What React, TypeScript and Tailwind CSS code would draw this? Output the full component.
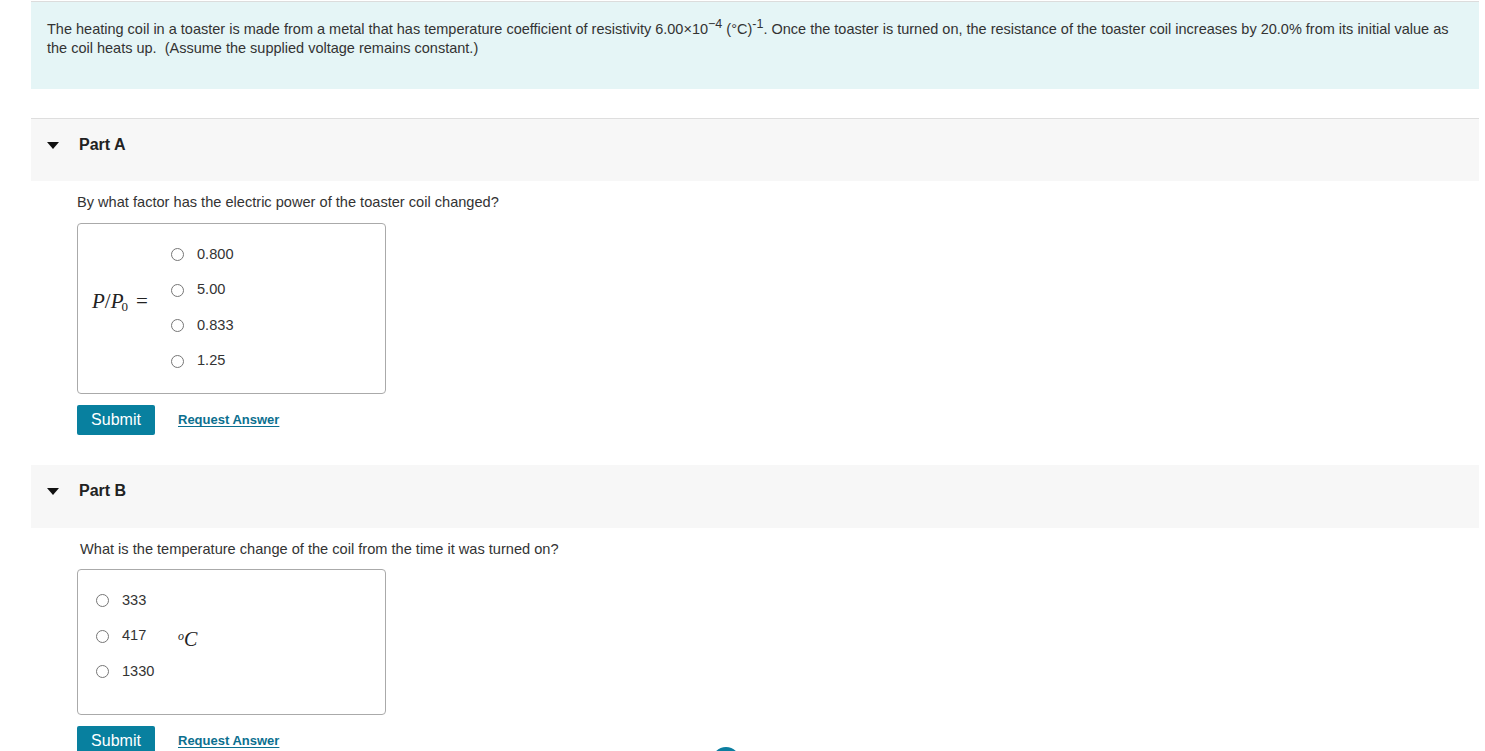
import React from "react";

const Radio = ({ label }: { label: string }) => (
  <div className="flex items-center h-[35.5px]">
    <span className="w-[13px] h-[13px] rounded-full border border-[#767676] bg-white shrink-0" />
    <span className="ml-[13px] text-[14.6px] text-[#333]">{label}</span>
  </div>
);

const Caret = () => (
  <svg width="12" height="7" viewBox="0 0 12 7" className="shrink-0 mt-[6px]">
    <path d="M0 0 L12 0 L6 7 Z" fill="#111" />
  </svg>
);

const PartHeader = ({ title, border }: { title: string; border?: boolean }) => (
  <div className={`flex items-start h-[63px] bg-[#f7f7f7] pl-[16px] pt-[17px] ${border ? "border-t border-[#dedede]" : ""}`}>
    <Caret />
    <span className="ml-[20px] text-[16px] leading-[18px] font-bold text-[#222]">{title}</span>
  </div>
);

const Actions = () => (
  <div className="flex items-center ml-[46px]">
    <button className="h-[30px] w-[78px] bg-[#08809f] text-white text-[16px] rounded-[2px]">Submit</button>
    <a className="ml-[23px] text-[13px] font-bold text-[#0b6f8f] underline underline-offset-2">Request Answer</a>
  </div>
);

const serif = { fontFamily: '"Liberation Serif", "Times New Roman", serif' };

export default function App() {
  return (
    <div className="relative w-[1485px] h-[751px] overflow-hidden bg-white" style={{ fontFamily: '"Liberation Sans", Arial, sans-serif' }}>
      <div className="ml-[31px] mr-[6px]">
        <div className="mt-[1px] border-t border-[#dcdcdc] bg-[#e5f5f6] h-[88px] px-[16px] pt-[18px] text-[14.5px] leading-[19px] text-[#333]">
          The heating coil in a toaster is made from a metal that has temperature coefficient of resistivity 6.00×10
          <sup className="text-[12.5px]">−4</sup> (°C)<sup className="text-[12.5px]">-1</sup>. Once the toaster is turned on, the resistance of the toaster coil increases by 20.0% from its initial value as the coil heats up.&nbsp; (Assume the supplied voltage remains constant.)
        </div>

        <div className="mt-[29px]">
          <PartHeader title="Part A" border />
        </div>
        <div className="ml-[46px] mt-[12px] text-[14.6px] leading-[19px] text-[#333]">
          By what factor has the electric power of the toaster coil changed?
        </div>
        <div className="ml-[46px] mt-[11px] w-[309px] h-[171px] border border-[#aaa] rounded-[4px] flex">
          <div className="flex items-center pl-[14px] w-[93px] pb-[14px] text-[21px] text-[#222]" style={serif}>
            <span className="italic">P</span>
            <span>/</span>
            <span className="italic">P</span>
            <span className="text-[13px] relative top-[5px] -ml-[2px]">0</span>
            <span className="ml-[8px]">=</span>
          </div>
          <div className="pt-[13px]">
            <Radio label="0.800" />
            <Radio label="5.00" />
            <Radio label="0.833" />
            <Radio label="1.25" />
          </div>
        </div>
        <div className="mt-[11px]">
          <Actions />
        </div>

        <div className="mt-[30px]">
          <PartHeader title="Part B" />
        </div>
        <div className="ml-[49px] mt-[12px] text-[14.6px] leading-[19px] text-[#333]">
          What is the temperature change of the coil from the time it was turned on?
        </div>
        <div className="ml-[46px] mt-[10px] w-[309px] h-[146px] border border-[#aaa] rounded-[4px] flex">
          <div className="pl-[18px] pt-[13px] w-[100px]">
            <Radio label="333" />
            <Radio label="417" />
            <Radio label="1330" />
          </div>
          <div className="pt-[54px] text-[#222]" style={serif}>
            <sup className="italic text-[12px]">o</sup>
            <span className="italic text-[20px]">C</span>
          </div>
        </div>
        <div className="mt-[11px]">
          <Actions />
        </div>
      </div>
      <div className="absolute left-[712px] top-[747px] w-[28px] h-[28px] rounded-full bg-[#0b7ea0]" />
    </div>
  );
}
